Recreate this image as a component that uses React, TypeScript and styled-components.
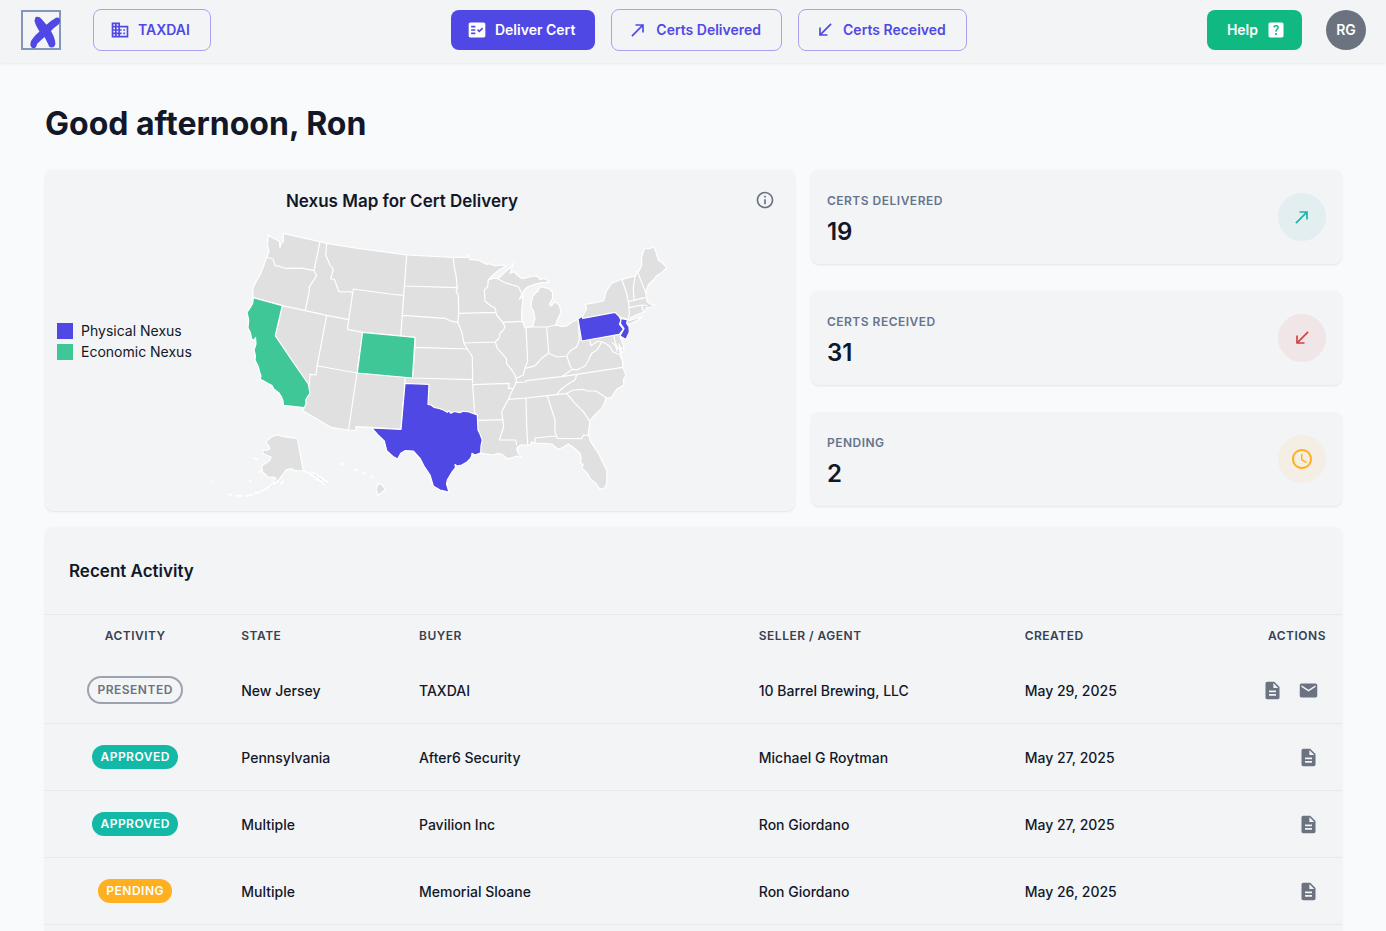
import React from 'react';
import styled, { createGlobalStyle } from 'styled-components';
import {
  MdAccessTime,
  MdCallMade,
  MdCallReceived,
  MdDescription,
  MdDomain,
  MdEmail,
  MdFactCheck,
  MdHelpCenter,
  MdInfoOutline,
} from 'react-icons/md';

const color = {
  page: '#f9fafc',
  surface: '#f3f4f6',
  divider: '#e6e8f0',
  text: '#121828',
  heading: '#374151',
  muted: '#65748b',
  neutral: '#6b7280',
  primary: '#5048e5',
  primaryBorder: '#a7a3f2',
  success: '#14b8a6',
  warning: '#ffb020',
  error: '#d14343',
  help: '#10b981',
  economic: '#40c798',
  land: '#e0e0e0',
};

const GlobalStyle = createGlobalStyle`
  *, *::before, *::after { box-sizing: border-box; }
  body {
    margin: 0;
    background: ${color.page};
    color: ${color.text};
    font-family: Inter, "Liberation Sans", sans-serif;
    font-size: 14px;
    -webkit-font-smoothing: antialiased;
  }
  h1, h2, p, dl, dt, dd, ul { margin: 0; padding: 0; }
`;

const Page = styled.div`
  display: flex;
  flex-direction: column;
  min-height: 100vh;
`;

const Header = styled.header`
  display: flex;
  align-items: center;
  min-height: 63px;
  padding: 8px 20px 11px 21px;
  background: ${color.surface};
  box-shadow: 0 1px 3px rgba(100, 116, 139, 0.12);
`;

const LogoLink = styled.a`
  display: flex;
  margin-right: 32px;
`;

const Nav = styled.nav`
  display: flex;
  flex: 1;
  flex-wrap: wrap;
  align-items: center;
  justify-content: center;
  gap: 16px;
`;

type ButtonKind = 'primary' | 'outlined' | 'help';

const Button = styled.button<{ $kind: ButtonKind }>`
  display: inline-flex;
  align-items: center;
  gap: 8px;
  height: ${(p) => (p.$kind === 'outlined' ? 42 : 40)}px;
  padding: ${(p) => (p.$kind === 'help' ? '0 16px 0 20px' : '0 20px 0 16px')};
  border: ${(p) => (p.$kind === 'outlined' ? `1px solid ${color.primaryBorder}` : 'none')};
  border-radius: 8px;
  background: ${(p) =>
    p.$kind === 'primary' ? color.primary : p.$kind === 'help' ? color.help : 'transparent'};
  color: ${(p) => (p.$kind === 'outlined' ? color.primary : '#ffffff')};
  font: 600 14px/24px Inter, "Liberation Sans", sans-serif;
  white-space: nowrap;
  cursor: pointer;
`;

const Avatar = styled.button`
  width: 40px;
  height: 40px;
  margin-left: 24px;
  padding: 0;
  border: none;
  border-radius: 50%;
  background: ${color.neutral};
  color: #ffffff;
  font: 600 14px/20px Inter, "Liberation Sans", sans-serif;
  cursor: pointer;
`;

const Main = styled.main`
  display: flex;
  flex: 1;
  flex-direction: column;
  padding: 37px 44px 0 45px;
`;

const Greeting = styled.h1`
  margin-bottom: 22px;
  font-size: 32px;
  font-weight: 700;
  line-height: 48px;
`;

const Overview = styled.div`
  display: grid;
  grid-template-columns: repeat(12, minmax(0, 1fr));
  gap: 16px;
  margin-bottom: 16px;
`;

const Card = styled.section`
  border-radius: 8px;
  background: ${color.surface};
  box-shadow: 0 1px 2px rgba(100, 116, 139, 0.15);
`;

const MapCard = styled(Card)`
  grid-column: span 7;
`;

const MapHeader = styled.div`
  display: flex;
  align-items: center;
  height: 60px;
  padding: 0 12px;
`;

const MapTitle = styled.h2`
  flex: 1;
  padding-top: 2px;
  font-size: 17px;
  font-weight: 600;
  line-height: 24px;
  text-align: center;
`;

const IconButton = styled.button`
  display: inline-flex;
  align-items: center;
  justify-content: center;
  width: 36px;
  height: 36px;
  padding: 0;
  border: none;
  border-radius: 50%;
  background: transparent;
  color: ${color.neutral};
  vertical-align: middle;
  cursor: pointer;
`;

const MapBody = styled.div`
  display: flex;
  align-items: flex-start;
  gap: 8px;
  padding-left: 12px;
`;

const Legend = styled.ul`
  flex: none;
  width: 135px;
  padding-top: 90px;
  list-style: none;
`;

const LegendItem = styled.li`
  display: flex;
  align-items: center;
  gap: 8px;
  line-height: 21px;
  white-space: nowrap;
`;

const Swatch = styled.span<{ $color: string }>`
  width: 16px;
  height: 16px;
  background: ${(p) => p.$color};
`;

const MapDrawing = styled.svg`
  flex: 0 1 480px;
  min-width: 0;
  height: 281px;
`;

const Stats = styled.div`
  display: flex;
  grid-column: span 5;
  flex-direction: column;
  gap: 27px;
`;

const StatCard = styled(Card)`
  display: flex;
  align-items: center;
  justify-content: space-between;
  padding: 16px;
`;

const StatLabel = styled.dt`
  color: ${color.muted};
  font-size: 12px;
  font-weight: 600;
  line-height: 30px;
  letter-spacing: 0.5px;
  text-transform: uppercase;
`;

const StatValue = styled.dd`
  font-size: 24px;
  font-weight: 600;
  line-height: 32px;
`;

const StatIcon = styled.span<{ $color: string }>`
  display: flex;
  align-items: center;
  justify-content: center;
  width: 48px;
  height: 48px;
  border-radius: 50%;
  background: ${(p) => p.$color}14;
  color: ${(p) => p.$color};
`;

const ActivityCard = styled(Card)`
  flex: 1;
  border-radius: 8px 8px 0 0;
`;

const ActivityTitle = styled.h2`
  padding: 32px 24px 31px;
  font-size: 17px;
  font-weight: 600;
  line-height: 24px;
`;

const Table = styled.table`
  width: 100%;
  border-collapse: separate;
  border-spacing: 0;
  table-layout: fixed;
`;

type Align = 'left' | 'center' | 'right';

const HeadCell = styled.th<{ $align?: Align; $width?: string }>`
  width: ${(p) => p.$width ?? 'auto'};
  height: 43px;
  padding: 0 16px 2px;
  border-top: 1px solid ${color.divider};
  color: ${color.heading};
  font-size: 12px;
  font-weight: 600;
  letter-spacing: 0.5px;
  text-align: ${(p) => p.$align ?? 'left'};
  text-transform: uppercase;
`;

const Cell = styled.td<{ $align?: Align }>`
  height: 67px;
  padding: 0 16px;
  border-bottom: 1px solid ${color.divider};
  text-align: ${(p) => p.$align ?? 'left'};
`;

const TextCell = styled(Cell)`
  padding-top: 2px;
  font-weight: 500;
  line-height: 22px;
`;

type Status = 'Presented' | 'Approved' | 'Pending';

const Badge = styled.span<{ $status: Status }>`
  display: inline-block;
  padding: 2px 8px;
  border: ${(p) => (p.$status === 'Presented' ? '2px solid #9ca3af' : 'none')};
  border-radius: 14px;
  background: ${(p) =>
    p.$status === 'Approved' ? color.success : p.$status === 'Pending' ? color.warning : 'transparent'};
  color: ${(p) => (p.$status === 'Presented' ? color.neutral : '#ffffff')};
  font-size: 12px;
  font-weight: 600;
  line-height: 20px;
  letter-spacing: 0.5px;
  text-transform: uppercase;
  vertical-align: middle;
`;

const Logo = () => (
  <svg width="40" height="40" viewBox="0 0 40 40" aria-hidden="true">
    <rect x="1" y="1" width="38" height="38" fill="none" stroke="#8398b9" strokeWidth="2" />
    <path
      fill={color.primary}
      d="M14 9Q14 6.500 16 6.700Q19 6.600 20.500 9L25.500 14.800Q30 10.500 35 7.800Q38 6.500 39 9.500Q39.800 12.500 37.500 14.500Q33 17.500 30 21Q33 26 34 30.500Q35 34.500 33.500 36.300Q31 38.500 28.300 36.800Q26 31.500 23.500 27Q19.500 30.500 16 34Q15.500 38 12.800 38.300Q10 38.500 9.300 34.500Q9.500 30.500 12.500 27.500Q15 24.500 18.500 21.500Q14.500 15 14 12.500Q13 10.500 14 9z"
    />
  </svg>
);

const mainland =
  'M268.300 235L273.300 238.300L279.300 241L280 247.700L281 243.500L283.300 241.700L283.300 233.300' +
  'L320 241.700L326.700 243.300L358 248.500L390 252.700L406.700 255L453.300 257.300L467.300 257.300L468 254L469.500 259.300' +
  'L475 260L480 260.700L482 262L486.700 264.300L490 263.800L495 266L500 265L506.500 266L500 269.500L494 274L488.300 280' +
  'L493 278.500L498.300 278.300L501 276L506 271L512 266.500L513.500 263L512 268L510 273.500L514 271.500L517 275L522 278.700L526.700 277.700' +
  'L531 276.500L536.700 276L540 279.300L545 278.300L549.300 282.300L541.700 282.700L535 284.300L526.700 287.300L523.300 291.700' +
  'L519.500 299L523.300 296L522.500 303L521.700 310L521.500 317L523 323L525 327.700L532.700 326.700' +
  'L535 318.300L533.500 311L531 306.700L531.500 301L532.700 296.700L535 293.500L538 291L540 286.700L548.300 288.300L552.300 291.700L552.700 298.300L549.300 304.300L551 306L555 301.700' +
  'L559.300 305L561 312.300L557.300 320L555.700 325L561.700 326.700L566.700 326L572 322L578.300 319.300L582.300 316.700' +
  'L586.700 308.300L585 304.300L594 303L603.300 301L605 297L606 291.700L611.700 283.300L621.700 279.300L635 276L637.300 272.700L639.500 270' +
  'L641.700 265L641.500 259L642.700 253.300L645 247.700L648.300 249L654 247.300L656 252L658.300 260L661.700 262.300L666.700 267.700' +
  'L661.700 272.700L656.700 275.700L653.300 280L648.300 285L646 291.700L646 295.700L647.300 301.700L651.700 305L655 304.300L654 306.500L650 307.500L647 307.300L644 312.300' +
  'L637 314.500L631 317.500L629.300 320.500L636 318.500L642.700 316.700L637 320.500L631.700 323.300L627.500 324L629 327L628.300 333.300L625.700 339.300L620 336.700' +
  'L623.300 345L624 350L621.700 353.300L621 348L619 344L619.500 350L621 357L622.700 361.700L622.700 367.300L626 375L623.300 380L624 385' +
  'L616.700 389.300L614 393L611.700 397.300L606 398.300L604 404L601.700 408.300L595 415L590 420.700L588.300 434L590.700 441.700L599.300 455L603 463L606.700 470L607 477L606.700 483.300L605 487.700L600 489.300' +
  'L596 483.300L590.700 479.300L587.300 473.300L581.700 468.300L583.300 465L580.700 462.700L581 457L580 453.300L573.300 447.300L568.300 444L563.300 447.300L558.300 449.300L551.700 444L543.300 443.300L535 443.300' +
  'L531.700 441.700L530 445L520.700 445L516.700 448.300L518 453L522 458L516.700 456L513.300 457.300L507.300 459L503 455L498.300 453.300L493.300 455L481.700 453.300' +
  'L450 460L401 429.300L371 427.300L356 426.700L355.700 430.700L348.300 430L331 427.300L302.700 410.700L304.300 407.700' +
  'L285 395L262 345L253 298L252.700 288.300L257 280L260 275L264 265L266.700 257.300L269 251L267.500 245z';

const stateBorders = [
  // Pacific and mountain states
  'M266.700 257.300l6.600 2 1.700 6.400 4 .5 6 2.100 9-.2 9.300.2 10.700 2.400M320 241.700l-6 29 2.700 5-7.700 11.600.5 3-4.200 20.400',
  'M253.300 297.700l29 8 23 5 21.400 4.600 21 4M326.700 243.300l-1 11.700 4.300 10 3.300 4.300-2.600 9.700 3.600.3 4.700 12.400 6 .3 5-.5 2.700 1.800',
  'M353.300 289l36.700 5 13.300 1.300M353.300 289l-6 40.300 15.400 3 52.300 5M326.700 315.300l-9.700 51-1 8.700-6-.7-.7 10.700',
  'M318 366l39 7 55.500 4.500M362.700 332.300L357 373l-8.500 57M282.300 305.700l-7 30',
  // Great Plains
  'M406.700 255L400.700 335.700M405 286l52.300 1.700M453.300 257.300l.7 8.700 2 9 1.300 13-1.300 3.700 2.300 3.300.4 18.300-1 9',
  'M402.300 315.300l42.700 3 5 2.500 7.700 1.500 4 9.400 2.300 11.600 3.300 5.700 2.700 4 2.300 4 .4 26',
  'M458.700 313.300l37.300-1M415 337.500v9.800l-2.500 30.700M415 347.300l52.300 1.700M464 343l31.300-1M412.500 378l60 1.700M405 378v5.300l-4 46',
  'M472.700 384.600l36.600-1.300-1 5h3.700M472.700 384.600l2 28.700 3 2M479 420.300l23.300-.6',
  // Mississippi valley
  'M488.300 280l-.6 6.700-3.400 3.300.7 11 4.500 4 5.500 3 1.700 7 6 7.300 2.300 4.400-1.500 3.300-3.500 3.300-1 4.700-3.700 4 2 6.300 4.500 5 4.900 5.700-.2 4.700 4.500 5.300 4 6 1.700 6.700-5 10-3.400 7.600-6.600 12.400 2 15-4.400 13.300h16.400l1 5',
  'M498.300 279l6.700 3.700 13.300 4 3.400 6.600M502.700 322.300l19.600-1M526 328l1.700 33-2.700 7M532 327h15l9-2M546.700 327.500l2 26',
  'M516.700 378l6.600-3 1.700-6.700 10-2.500 6.700-7.500 6.600-5 9 3.700 9.400-1 3.300-5 6.700-4.300 2.600-6.700-1-20M566.700 356l3.300 9.700 2.300 3.600-10.600 7.400',
  // Appalachia and the Mid-Atlantic
  'M572.300 369.300l5 .5 7.700-3.800 3.300-5.500 3.400-7.200 5-3 5-8M590 340l.7 5.700 7.600-4.700 5 1.300 4 2.200 2.700 2.200 2.700 5 7.300 3.300 2 4',
  'M614 336.700l1 5 2.700 6.600h6M612.500 343l3 2.500 1.500 5.500M515 382.700l11-.7v-1.300l35.700-4 61-9.400M508.300 399.300l17.700-1.300 21.300-2.300 19.400-2.400',
  'M557.300 394l3.400-4.300 6-4.700 8.300-5 1.700-5M566.700 393.300l6.600-3.300 10-.7 4 1.700h8.700l10 6.700M566.700 393.300l8.300 10 8.300 8.400 6 9',
  'M526 398l.7 28.700 1 18.300M547.300 395.700L555 420v11.700l2.300 6.600 24.400.3 1.600-3.600 5 .3M535 443.300v-5.300l21-2',
  // New England
  'M621.700 279.300l5 14 2 10 .6 10-1 6-1.300 3M635 276l-1.700 12.300.7 11M638 273.300l8 20M628.300 301.700l16.700-4M629.300 307.700l12.400-2.700 5 .5M641.700 305.500l1.800 7M619.300 316.700l8 2.500',
];

const california =
  'M253.300 297.700L282.300 305.700L275.300 335.700L291.700 360L308.300 384L310 393.300L308 396L305.700 400L306 404L304.300 407.700L283.300 405.300L283 401L281.700 397.300' +
  'L279 393L274 389.300L272 385.500L266.700 382.700L263 380.500L260 379.300L261 376L260 373.300L258.300 366.700L255 360L255.500 356L254 350L256 344L255.500 337.500L253.500 340.500' +
  'L251.700 339L250.500 333L248 328L248.700 320L247 312.500L250 308L252.700 303.300z';
const colorado = 'M362.500 332.300l52.500 5.200-2.500 40.500-55.200-5z';
const texas =
  'M405 383.300L429 384.300L428 404.300L431 405L434 407.300L439 408.500L443.300 410L447.300 412.300L449 411L451 413.300L454 411.500L460 412.700L463 411.300L468.300 411.700L473 413.500L477.300 415' +
  'L478 430L480 434L482.300 440L481 446L480.700 452.700L475 455L472 453.300L471.700 456L470 459L467 462L461.700 465L457 466L455 464.500L455.500 467.500L452 472L447.300 480L446.500 484L449 492' +
  'L440 490L433.300 486L431.500 480L430 475L424 466L420 458.300L413.300 451L405 450.700L400.700 453.300L397.700 459L393 456.500L386.700 450.700L384.300 441L378 435L371.700 428L401 429.300z';
const pennsylvania = 'M578 319l4-2.700.7 2L615 312.300l4.300 4.400 1.700 3.300-1.500 4.300 4 4.700-4.200 5.300L581.700 341z';
const newJersey = 'M621 318.700L627.300 319.700L626.700 323.300L629 326.700L629.300 332L626 339.500L620 336L624 328.700L620.500 323.500z';

const alaska =
  'M297.300 438.300L303.300 471L295 470.700L291 468.500L286 470L280 478.300L276 482.500L271 486.700L276 478.300L274 477L268.300 477.300L265 474L262.300 471.700L261.700 466' +
  'L266 463L270 460L271 456.700L267 455.500L262.300 453.300L263.500 450L267 450.500L270 448.300L268.500 445.500L265.700 442.300L268 439.500L271.700 436.700L278.300 434.700L282 436.500L288.300 437.300z';
const hawaii =
  'M378.300 483.300l4 2 3.400 4-3.500 3-3.900 3.200-2.300-6.200zM370.500 475.500l3 .5.5 2-2.500-.5zM355 468.700l2 .5.5 1.500-2-.2zM340.500 463.500l2-.5.7 1.500-1.700.7z';

const Map = () => (
  <MapDrawing viewBox="200 230 480 281" role="img" aria-label="Nexus by state">
    <g stroke="#ffffff" strokeWidth="1.2" strokeLinejoin="round" strokeLinecap="round">
      <path d={mainland} fill={color.land} />
      <path d={stateBorders.join('')} fill="none" />
      <path d={california} fill={color.economic} />
      <path d={colorado} fill={color.economic} />
      <path d={texas} fill={color.primary} />
      <path d={pennsylvania} fill={color.primary} />
      <path d={newJersey} fill={color.primary} />
      <path d={alaska} fill={color.land} />
      <path d={hawaii} fill={color.land} />
      <path
        fill="none"
        strokeWidth="1.8"
        d="M253.500 458l4 1.500M259 472l1-.3M250 481h.2M212.500 482h.1M228.500 494.200l3 .7M236 495.500l6 .6M246 495.800l6-.8M255 493.500l5-1.600M262 491l4-2M267 488l5-3M274 484l4-3M281 484l2-2M363 473l2 .5M304 471.500l5 1.500 5 4M312 472l5 3 6 4 4 3M314 475l5 4M316 479l5 2 4 3.500"
      />
      <path
        fill="none"
        stroke={color.land}
        strokeWidth="1"
        d="M314 474.500l3 2M319 478l3 2M324 482l2 2M271 487l2-2"
      />
    </g>
  </MapDrawing>
);

const stats = [
  { label: 'Certs Delivered', value: 19, tone: color.success, icon: <MdCallMade size={20} /> },
  { label: 'Certs Received', value: 31, tone: color.error, icon: <MdCallReceived size={20} /> },
  { label: 'Pending', value: 2, tone: color.warning, icon: <MdAccessTime size={24} /> },
];

type Activity = {
  status: Status;
  state: string;
  buyer: string;
  seller: string;
  created: string;
  mail?: boolean;
};

const activities: Activity[] = [
  { status: 'Presented', state: 'New Jersey', buyer: 'TAXDAI', seller: '10 Barrel Brewing, LLC', created: 'May 29, 2025', mail: true },
  { status: 'Approved', state: 'Pennsylvania', buyer: 'After6 Security', seller: 'Michael G Roytman', created: 'May 27, 2025' },
  { status: 'Approved', state: 'Multiple', buyer: 'Pavilion Inc', seller: 'Ron Giordano', created: 'May 27, 2025' },
  { status: 'Pending', state: 'Multiple', buyer: 'Memorial Sloane', seller: 'Ron Giordano', created: 'May 26, 2025' },
];

export default function App() {
  return (
    <Page>
      <GlobalStyle />
      <Header>
        <LogoLink href="#" aria-label="Home">
          <Logo />
        </LogoLink>
        <Button $kind="outlined" type="button">
          <MdDomain size={20} />
          TAXDAI
        </Button>
        <Nav>
          <Button $kind="primary" type="button">
            <MdFactCheck size={20} />
            Deliver Cert
          </Button>
          <Button $kind="outlined" type="button">
            <MdCallMade size={20} />
            Certs Delivered
          </Button>
          <Button $kind="outlined" type="button">
            <MdCallReceived size={20} />
            Certs Received
          </Button>
        </Nav>
        <Button $kind="help" type="button">
          Help
          <MdHelpCenter size={20} />
        </Button>
        <Avatar type="button" aria-label="Account of RG">
          RG
        </Avatar>
      </Header>

      <Main>
        <Greeting>Good afternoon, Ron</Greeting>
        <Overview>
          <MapCard>
            <MapHeader>
              <MapTitle>Nexus Map for Cert Delivery</MapTitle>
              <IconButton type="button" aria-label="About the nexus map">
                <MdInfoOutline size={20} />
              </IconButton>
            </MapHeader>
            <MapBody>
              <Legend>
                <LegendItem>
                  <Swatch $color={color.primary} />
                  Physical Nexus
                </LegendItem>
                <LegendItem>
                  <Swatch $color={color.economic} />
                  Economic Nexus
                </LegendItem>
              </Legend>
              <Map />
            </MapBody>
          </MapCard>
          <Stats>
            {stats.map((s) => (
              <StatCard key={s.label}>
                <dl>
                  <StatLabel>{s.label}</StatLabel>
                  <StatValue>{s.value}</StatValue>
                </dl>
                <StatIcon $color={s.tone}>{s.icon}</StatIcon>
              </StatCard>
            ))}
          </Stats>
        </Overview>

        <ActivityCard>
          <ActivityTitle>Recent Activity</ActivityTitle>
          <Table>
            <thead>
              <tr>
                <HeadCell scope="col" $align="center" $width="13.9%">Activity</HeadCell>
                <HeadCell scope="col" $width="13.7%">State</HeadCell>
                <HeadCell scope="col" $width="26.2%">Buyer</HeadCell>
                <HeadCell scope="col" $width="20.5%">Seller / Agent</HeadCell>
                <HeadCell scope="col">Created</HeadCell>
                <HeadCell scope="col" $align="right" $width="10%">Actions</HeadCell>
              </tr>
            </thead>
            <tbody>
              {activities.map((a, i) => (
                <tr key={i}>
                  <Cell $align="center">
                    <Badge $status={a.status}>{a.status}</Badge>
                  </Cell>
                  <TextCell>{a.state}</TextCell>
                  <TextCell>{a.buyer}</TextCell>
                  <TextCell>{a.seller}</TextCell>
                  <TextCell>{a.created}</TextCell>
                  <Cell $align="right">
                    <IconButton type="button" aria-label="View document">
                      <MdDescription size={21} />
                    </IconButton>
                    {a.mail && (
                      <IconButton type="button" aria-label="Send email">
                        <MdEmail size={21} />
                      </IconButton>
                    )}
                  </Cell>
                </tr>
              ))}
            </tbody>
          </Table>
        </ActivityCard>
      </Main>
    </Page>
  );
}
